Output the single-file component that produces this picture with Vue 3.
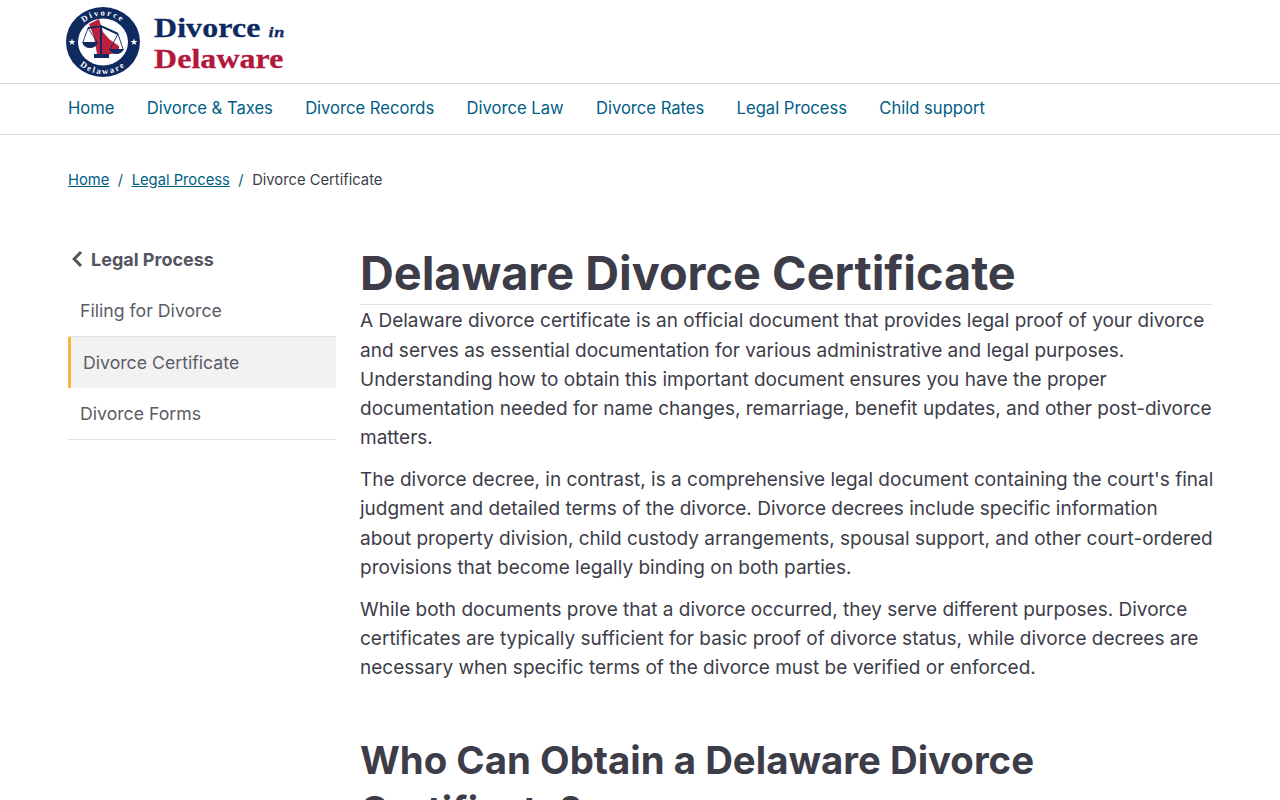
<script setup>
const navLinks = ['Home', 'Divorce & Taxes', 'Divorce Records', 'Divorce Law', 'Divorce Rates', 'Legal Process', 'Child support']

const sideLinks = [
  { label: 'Filing for Divorce' },
  { label: 'Divorce Certificate', current: true },
  { label: 'Divorce Forms' },
]
</script>

<template>
  <div class="page">
    <header class="masthead">
      <a class="logo" href="#">
        <svg class="seal" viewBox="0 0 74 70" width="74" height="70">
          <defs>
            <path id="arc-top" d="M9 35 A28 26.5 0 0 1 65 35" />
            <path id="arc-bottom" d="M3.5 35 A33.5 32 0 0 0 70.5 35" />
          </defs>
          <ellipse cx="37" cy="35" rx="37" ry="35" fill="#0f2a5f" />
          <ellipse cx="37" cy="35" rx="25" ry="23.5" fill="#fff" />
          <path d="M23 17 L33 12 L37 25 L43 32 L53 39 L53 45 L37 49 L31 47 L28 30 Z" fill="#bd1f3f" />
          <path d="M35 18 V48 M22 21 L35 19 L52 27" stroke="#0f2a5f" stroke-width="2" fill="none" />
          <path d="M22 21 L17 35 M22 21 L31 35 M52 27 L44 42 M52 27 L57 42" stroke="#0f2a5f" stroke-width=".9" fill="none" />
          <path d="M16 35 H32 Q30 41 24 41 Q18 41 16 35 Z M43 42 H58 Q56 47 50 47 Q45 47 43 42 Z" fill="#0f2a5f" />
          <path d="M28 47 H43 V51 H28 Z" fill="#0f2a5f" />
          <text class="seal-text" fill="#fff"><textPath href="#arc-top" startOffset="50%" text-anchor="middle">Divorce</textPath></text>
          <text class="seal-text" fill="#fff"><textPath href="#arc-bottom" startOffset="50%" text-anchor="middle">Delaware</textPath></text>
          <path d="M6 31.5 L6.9 34 L9.5 34 L7.4 35.6 L8.2 38 L6 36.6 L3.8 38 L4.6 35.6 L2.5 34 L5.1 34 Z M68 31.5 L68.9 34 L71.5 34 L69.4 35.6 L70.2 38 L68 36.6 L65.8 38 L66.6 35.6 L64.5 34 L67.1 34 Z" fill="#fff" />
        </svg>
        <span class="wordmark">
          <span class="word-top">Divorce <em>in</em></span>
          <span class="word-bottom">Delaware</span>
        </span>
      </a>
    </header>

    <nav class="main-nav">
      <a v-for="link in navLinks" :key="link" href="#">{{ link }}</a>
    </nav>

    <div class="breadcrumb">
      <a href="#">Home</a>
      <span class="sep">/</span>
      <a href="#">Legal Process</a>
      <span class="sep">/</span>
      <span>Divorce Certificate</span>
    </div>

    <div class="layout">
      <aside class="sidebar">
        <a class="side-parent" href="#">
          <svg viewBox="0 0 12 18" width="12" height="18">
            <path d="M10 2 L3.2 9 L10 16" fill="none" stroke="#54545f" stroke-width="3" />
          </svg>
          Legal Process
        </a>
        <ul>
          <li v-for="item in sideLinks" :key="item.label" :class="{ current: item.current }">
            <a href="#">{{ item.label }}</a>
          </li>
        </ul>
      </aside>

      <main class="content">
        <h1>Delaware Divorce Certificate</h1>
        <p>A Delaware divorce certificate is an official document that provides legal proof of your divorce and serves as essential documentation for various administrative and legal purposes. Understanding how to obtain this important document ensures you have the proper documentation needed for name changes, remarriage, benefit updates, and other post-divorce matters.</p>
        <p>The divorce decree, in contrast, is a comprehensive legal document containing the court's final judgment and detailed terms of the divorce. Divorce decrees include specific information about property division, child custody arrangements, spousal support, and other court-ordered provisions that become legally binding on both parties.</p>
        <p>While both documents prove that a divorce occurred, they serve different purposes. Divorce certificates are typically sufficient for basic proof of divorce status, while divorce decrees are necessary when specific terms of the divorce must be verified or enforced.</p>
        <h2>Who Can Obtain a Delaware Divorce Certificate?</h2>
      </main>
    </div>
  </div>
</template>

<style>
html, body {
  margin: 0;
  background: #fff;
  overflow: hidden;
}
</style>

<style scoped>
* {
  box-sizing: border-box;
}

.page {
  height: 800px;
  overflow: hidden;
  font-family: Inter, "Liberation Sans", sans-serif;
  color: #3d3d49;
}

.masthead {
  height: 84px;
  padding: 7px 66px 0;
  border-bottom: 1px solid #d9d9dc;
}

.logo {
  display: flex;
  align-items: flex-start;
  gap: 14px;
  text-decoration: none;
}

.seal-text {
  font-family: "Liberation Serif", serif;
  font-size: 8.5px;
  font-weight: 700;
  letter-spacing: 2px;
}

.wordmark {
  display: flex;
  flex-direction: column;
  padding-top: 8px;
  font-family: "Liberation Serif", serif;
  font-weight: 700;
  font-size: 27px;
  line-height: 26.5px;
  letter-spacing: 0.1px;
  -webkit-text-stroke: 0.3px;
  transform: scaleX(1.18);
  transform-origin: left top;
}

.word-top {
  color: #0f2a5f;
}

.word-top em {
  font-size: 15.5px;
  letter-spacing: 0.5px;
}

.word-bottom {
  color: #b3173a;
}

.main-nav {
  height: 51px;
  padding: 0 68px 2px;
  display: flex;
  align-items: center;
  gap: 32.3px;
  border-bottom: 1px solid #d9d9dc;
  font-size: 16.6px;
}

.main-nav a {
  color: #005e85;
  text-decoration: none;
}

.breadcrumb {
  padding: 36px 68px 0;
  height: 95px;
  display: flex;
  gap: 8.5px;
  font-size: 14.75px;
  line-height: 18px;
}

.breadcrumb a,
.breadcrumb .sep {
  color: #005e85;
}

.layout {
  display: flex;
  padding: 0 68px;
  gap: 24px;
}

.sidebar {
  width: 268px;
  flex: none;
}

.side-parent {
  display: flex;
  align-items: center;
  gap: 8px;
  padding: 0 0 0 3px;
  height: 30px;
  margin-top: 14px;
  color: #54545f;
  font-weight: 700;
  font-size: 18px;
  text-decoration: none;
}

.sidebar ul {
  list-style: none;
  margin: 11px 0 0;
  padding: 0;
}

.sidebar li {
  height: 51.5px;
  padding-left: 12px;
  display: flex;
  align-items: center;
  border-bottom: 1px solid #e0e0e2;
  font-size: 17.7px;
}

.sidebar li a {
  color: #5c5c66;
  text-decoration: none;
}

.sidebar li.current {
  background: #f2f2f2;
  border-left: 3px solid #f5b83d;
  border-bottom: none;
}

.content {
  width: 852px;
  flex: none;
}

h1 {
  margin: 0 0 1.3px;
  padding-top: 12px;
  font-size: 46.8px;
  line-height: 62px;
  font-weight: 700;
  border-bottom: 1px solid #dfdfe2;
}

.content p {
  margin: 0 -1.5px 12.6px 0;
  font-size: 19px;
  line-height: 29.25px;
}

h2 {
  margin: 52.8px 0 0;
  font-size: 38.4px;
  line-height: 50px;
  font-weight: 700;
}
</style>
